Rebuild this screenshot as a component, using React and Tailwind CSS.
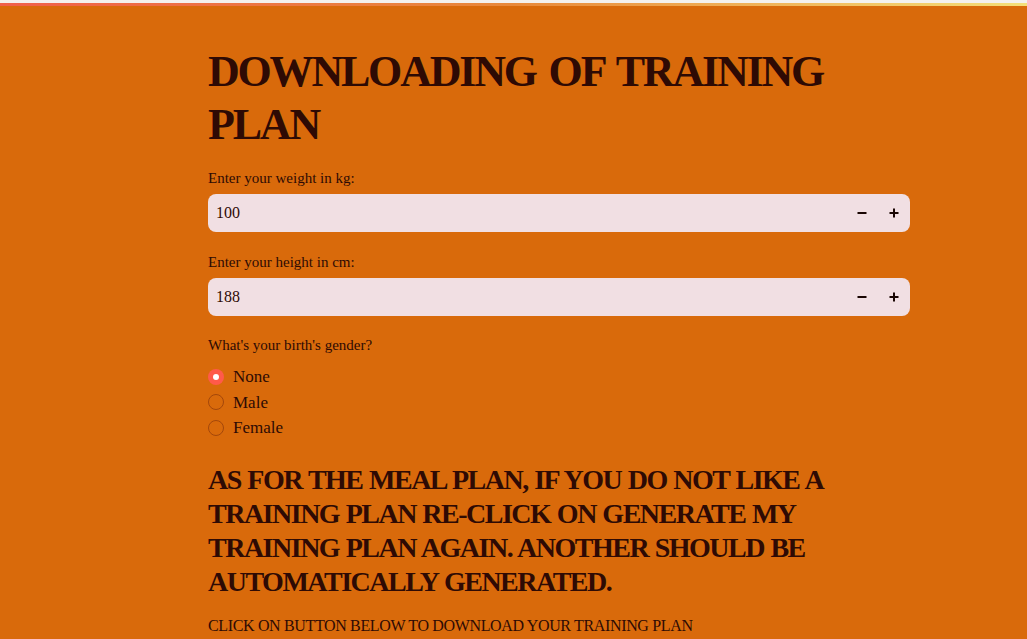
import React from 'react'

const serif = { fontFamily: '"Liberation Serif", "DejaVu Serif", serif' }

const NumberField = ({ label, value }) => (
  <div>
    <label className="block h-[21px] text-[15px] leading-[21px] text-[#2e0a04]">{label}</label>
    <div className="mt-[5px] flex h-[38px] items-center rounded-lg bg-[#f1dfe3] pl-2">
      <span className="flex-1 text-[16px] text-[#2e0a04]">{value}</span>
      <button className="flex h-[38px] w-8 items-center justify-center">
        <svg width="10" height="10" viewBox="0 0 10 10"><rect x="0.5" y="4" width="9" height="2" fill="#1a0603" /></svg>
      </button>
      <button className="flex h-[38px] w-8 items-center justify-center">
        <svg width="10" height="10" viewBox="0 0 10 10"><rect x="0.5" y="4" width="9" height="2" fill="#1a0603" /><rect x="4" y="0.5" width="2" height="9" fill="#1a0603" /></svg>
      </button>
    </div>
  </div>
)

const Radio = ({ label, checked }) => (
  <div className="flex h-[25.5px] items-center gap-[9px]">
    {checked ? (
      <span className="flex h-4 w-4 items-center justify-center rounded-full bg-[#ff5a4a]">
        <span className="h-[6px] w-[6px] rounded-full bg-white" />
      </span>
    ) : (
      <span className="h-4 w-4 rounded-full border border-[#a4470a]" />
    )}
    <span className="text-[17px] text-[#2e0a04]">{label}</span>
  </div>
)

export default function App() {
  return (
    <div className="min-h-[639px] w-full overflow-hidden bg-[#d96a0b]" style={serif}>
      <div className="h-[3px] bg-[#f3f1ee]" />
      <div className="h-[3px] bg-gradient-to-r from-[#f0604a] via-[#e8893a] to-[#f4e07a]" />
      <div className="ml-[208px] w-[702px]">
        <h1 className="mt-[39px] text-[44px] font-bold leading-[53px] tracking-[-2.2px] [word-spacing:4px] text-[#2e0a04]">
          DOWNLOADING OF TRAINING PLAN
        </h1>
        <div className="mt-[17px]">
          <NumberField label="Enter your weight in kg:" value="100" />
        </div>
        <div className="mt-[20px]">
          <NumberField label="Enter your height in cm:" value="188" />
        </div>
        <div className="mt-[19px]">
          <label className="block h-[21px] text-[15px] leading-[21px] text-[#2e0a04]">What's your birth's gender?</label>
          <div className="mt-[8px]">
            <Radio label="None" checked />
            <Radio label="Male" />
            <Radio label="Female" />
          </div>
        </div>
        <h2 className="mt-[22px] text-[28px] font-semibold leading-[34px] tracking-[-1.5px] [word-spacing:1px] text-[#2e0a04]">
          AS FOR THE MEAL PLAN, IF YOU DO NOT LIKE A TRAINING PLAN RE-CLICK ON GENERATE MY TRAINING PLAN AGAIN. ANOTHER SHOULD BE AUTOMATICALLY GENERATED.
        </h2>
        <p className="mt-[15px] text-[16px] leading-[24px] tracking-[-0.35px] text-[#2e0a04]">
          CLICK ON BUTTON BELOW TO DOWNLOAD YOUR TRAINING PLAN
        </p>
      </div>
    </div>
  )
}
